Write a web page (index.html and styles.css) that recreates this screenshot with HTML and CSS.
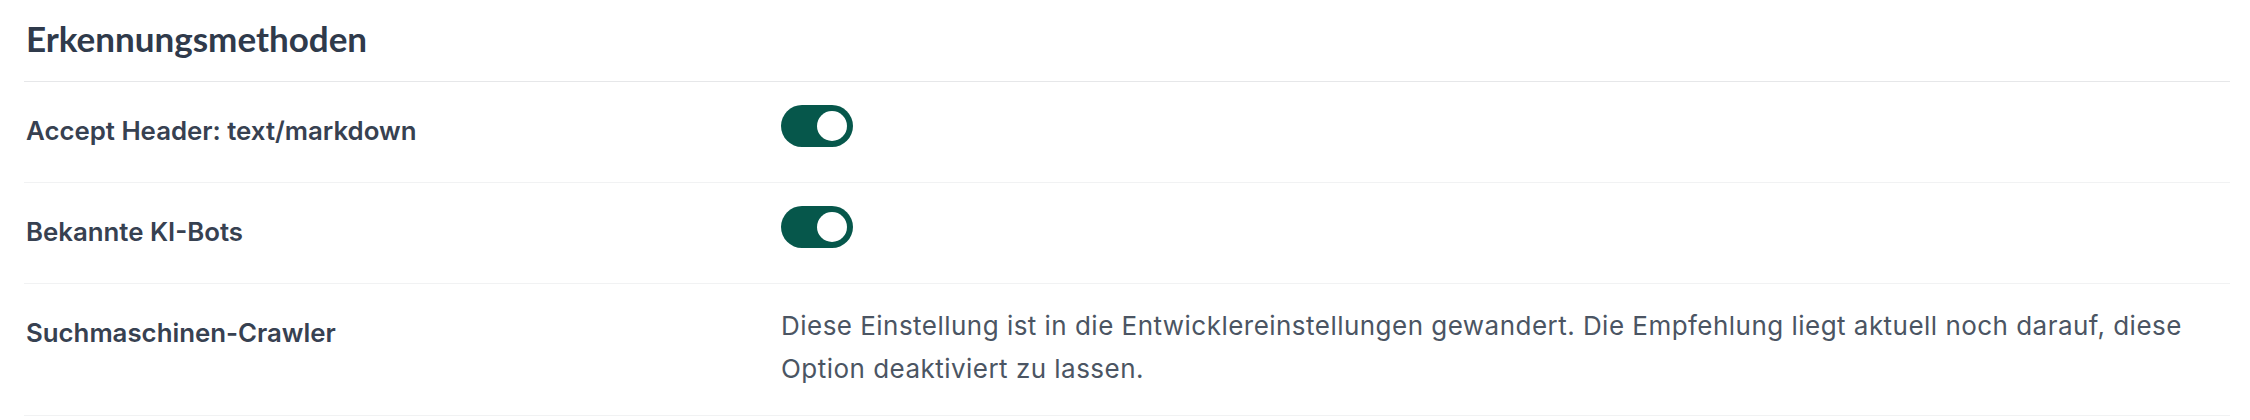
FILE: index.html
```html
<!DOCTYPE html>
<html lang="de">
<head>
<meta charset="utf-8">
<title>Erkennungsmethoden</title>
<link rel="stylesheet" href="styles.css">
</head>
<body>
<section class="panel">
  <header class="panel-head">
    <h2 class="panel-title">Erkennungsmethoden</h2>
  </header>
  <div class="row">
    <div class="label">Accept Header: text/markdown</div>
    <div class="value">
      <span class="toggle is-on" role="switch" aria-checked="true"><span class="knob"></span></span>
    </div>
  </div>
  <div class="row">
    <div class="label">Bekannte KI-Bots</div>
    <div class="value">
      <span class="toggle is-on" role="switch" aria-checked="true"><span class="knob"></span></span>
    </div>
  </div>
  <div class="row">
    <div class="label">Suchmaschinen-Crawler</div>
    <div class="value">
      <p class="desc">Diese Einstellung ist in die Entwicklereinstellungen gewandert. Die Empfehlung liegt aktuell noch darauf, diese Option deaktiviert zu lassen.</p>
    </div>
  </div>
</section>
</body>
</html>
```
FILE: styles.css
```css
* { box-sizing: border-box; }
html, body { margin: 0; padding: 0; background: #ffffff; }
body { font-family: Inter, "Liberation Sans", sans-serif; }

.panel {
  padding: 0 20px 0 24px;
}

.panel-head {
  border-bottom: 1px solid #e6e7e9;
  padding: 18px 2px 0;
  height: 82px;
}

.panel-title {
  margin: 0;
  font-family: Lato, "Noto Sans", sans-serif;
  font-weight: 700;
  font-size: 35px;
  line-height: 40px;
  color: #2f3a4b;
  letter-spacing: 0;
}

.row {
  display: grid;
  grid-template-columns: 757px 1fr;
  padding: 22.5px 0;
  border-bottom: 1px solid #f1f2f3;
}

.label {
  padding-left: 2px;
  min-height: 51px;
  display: flex;
  align-items: center;
  align-self: start;
  font-size: 25.8px;
  font-weight: 600;
  color: #374151;
}

.value {
  display: flex;
  align-items: flex-start;
  min-height: 55px;
}

.toggle {
  display: inline-flex;
  align-items: center;
  justify-content: flex-end;
  width: 72px;
  height: 42px;
  padding: 0 6px;
  border-radius: 21px;
  background: #06574b;
}

.knob {
  width: 30px;
  height: 30px;
  border-radius: 50%;
  background: #ffffff;
}

.desc {
  margin: -3px 0 3px;
  font-size: 26px;
  line-height: 43px;
  letter-spacing: 0.47px;
  font-weight: 400;
  color: #4b5563;
}
```
